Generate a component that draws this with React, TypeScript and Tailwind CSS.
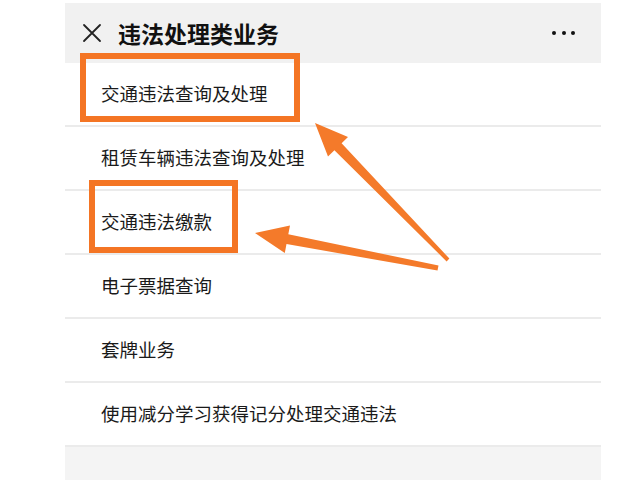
import React from "react";

export default function App(): JSX.Element {
  // Menu rows under the header
  const rows = [
    "交通违法查询及处理",
    "租赁车辆违法查询及处理",
    "交通违法缴款",
    "电子票据查询",
    "套牌业务",
    "使用减分学习获得记分处理交通违法",
  ];

  return (
    <div className="relative w-[640px] h-[480px] overflow-hidden bg-white pt-[3px] [font-family:'Noto_Sans_CJK_SC','Noto_Sans',sans-serif]">
      <div className="ml-[65px] w-[536px] h-[477px] flex flex-col bg-[#f4f4f4]">
        {/* Header */}
        <div className="h-[60px] flex items-center bg-[#f1f1f1] pl-[17px] pr-[26px]">
          <svg width="20" height="20" viewBox="0 0 20 20" className="shrink-0">
            <path d="M2 2 L18 18 M18 2 L2 18" stroke="#222" strokeWidth="1.8" strokeLinecap="round" />
          </svg>
          <span className="ml-[16px] text-[23px] font-bold text-[#111] leading-none">
            违法处理类业务
          </span>
          <div className="ml-auto flex items-center gap-[5.5px]">
            <span className="w-[4px] h-[4px] rounded-full bg-[#111]" />
            <span className="w-[4px] h-[4px] rounded-full bg-[#111]" />
            <span className="w-[4px] h-[4px] rounded-full bg-[#111]" />
          </div>
        </div>

        {/* List */}
        <div className="flex flex-col bg-white">
          {rows.map((row, index) => (
            <div
              key={index}
              className="h-[64px] flex items-center pl-[36px] border-b-2 border-[#ebebeb] text-[18.5px] text-[#1a1a1a]"
            >
              {row}
            </div>
          ))}
        </div>
      </div>

      {/* Annotation boxes */}
      <div className="absolute left-[80px] top-[53px] w-[220px] h-[69px] border-[6px] border-[#f47524]" />
      <div className="absolute left-[89px] top-[180px] w-[149px] h-[73px] border-[6px] border-[#f47524]" />

      {/* Annotation arrows */}
      <svg className="absolute left-0 top-0" width="640" height="480" viewBox="0 0 640 480">
        <polygon
          fill="#f47a2a"
          points="315,123 348,137 341.6,143.2 449.4,258.6 446.6,261.4 334.4,150.2 328,156.4"
        />
        <polygon
          fill="#f47a2a"
          points="255,233 290,225.5 288.3,234.3 438.5,265.5 437.5,270.5 286.5,244.1 284.8,252.9"
        />
      </svg>
    </div>
  );
}
